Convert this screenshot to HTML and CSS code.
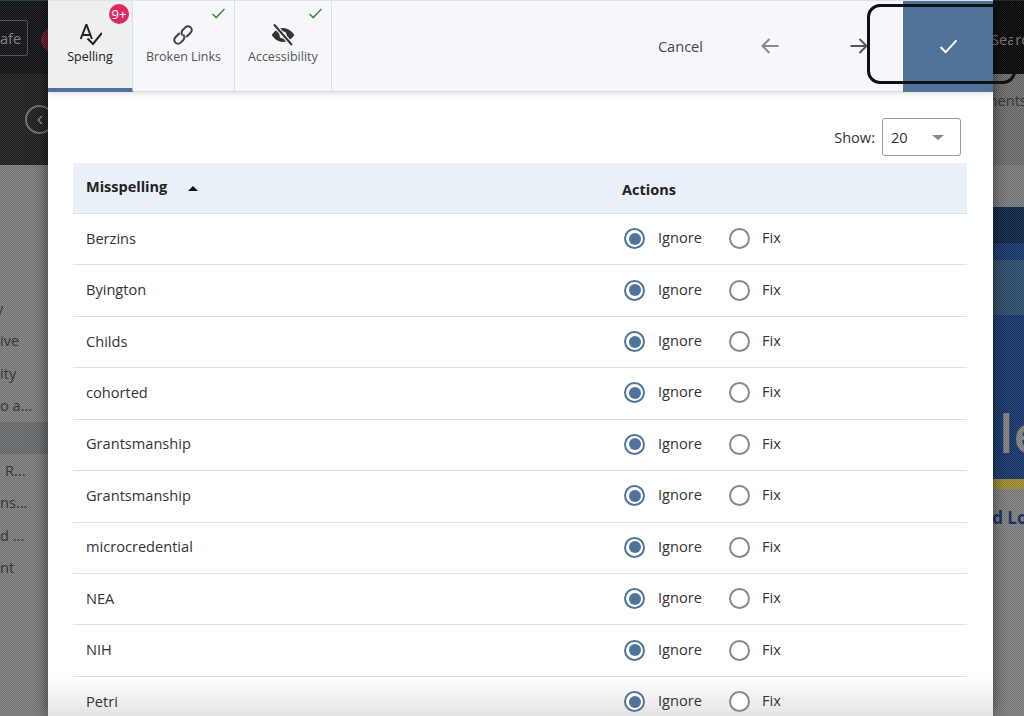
FILE: index.html
```html
<!DOCTYPE html>
<html lang="en">
<head>
<meta charset="utf-8">
<title>Spelling check</title>
<link rel="stylesheet" href="styles.css">
</head>
<body>
<div class="page">
  <aside class="side-left">
    <div class="bg-header"><span class="safe-btn">afe</span></div>
    <div class="bg-sub"><span class="back-circle"><svg viewBox="0 0 12 16" width="8" height="12"><path d="M9 2 3 8l6 6" fill="none" stroke="#999" stroke-width="2"/></svg></span></div>
    <div class="bg-nav">
      <div class="nav-item nav-clip">y</div>
      <div class="nav-item">ive</div>
      <div class="nav-item">ity</div>
      <div class="nav-item">o a...</div>
      <div class="nav-item nav-current"></div>
      <div class="nav-item nav-inset">R...</div>
      <div class="nav-item">ns...</div>
      <div class="nav-item">d ...</div>
      <div class="nav-item">nt</div>
    </div>
  </aside>

  <main class="modal">
    <header class="toolbar">
      <div class="tab tab-active">
        <span class="badge">9+</span>
        <svg class="tab-icon" viewBox="0 0 24 24" width="24" height="24"><path d="M2.700 16 8.200 2h.4l5.300 14M4.500 12h8" fill="none" stroke="#222" stroke-width="2"/><path d="M9.500 15.500 15 21l9-11" fill="none" stroke="#222" stroke-width="2"/></svg>
        <span class="tab-label">Spelling</span>
      </div>
      <div class="tab tab-links">
        <svg class="tick" viewBox="0 0 16 12" width="15" height="11"><path d="M1.500 6.500 5.500 10.500 14.500 1" fill="none" stroke="#3f8b45" stroke-width="1.600"/></svg>
        <svg class="tab-icon" viewBox="0 0 24 24" width="24" height="24"><g transform="translate(12 12) scale(.83) rotate(-45) translate(-12 -12)" fill="none" stroke="#444" stroke-width="2.500"><path d="M11 7.500H3.500a4.500 4.500 0 0 0 0 9H8a4.500 4.500 0 0 0 4.500-4.500"/><path d="M13 16.500h7.500a4.500 4.500 0 0 0 0-9H16a4.500 4.500 0 0 0-4.500 4.500"/></g></svg>
        <span class="tab-label">Broken Links</span>
      </div>
      <div class="tab tab-access">
        <svg class="tick" viewBox="0 0 16 12" width="15" height="11"><path d="M1.500 6.500 5.500 10.500 14.500 1" fill="none" stroke="#3f8b45" stroke-width="1.600"/></svg>
        <svg class="tab-icon" viewBox="0 0 24 24" width="24" height="24"><path d="M12 5C6.500 5 2.500 9 .8 12c1.700 3 5.700 7 11.200 7s9.500-4 11.200-7C21.500 9 17.500 5 12 5z" fill="#333"/><circle cx="12" cy="12" r="3.500" fill="#f5f7fa"/><path d="M3 1.500 21 22" stroke="#f5f7fa" stroke-width="4.500"/><path d="M3 1.500 21 22" stroke="#333" stroke-width="2"/></svg>
        <span class="tab-label">Accessibility</span>
      </div>
      <div class="actions">
        <span class="cancel">Cancel</span>
        <svg class="arrow-prev" viewBox="0 0 18 16" width="18" height="16"><path d="M17.500 8H1.500M8.500 1 1.500 8l7 7" fill="none" stroke="#8a8a8a" stroke-width="2"/></svg>
        <svg class="arrow-next" viewBox="0 0 18 16" width="18" height="16"><path d="M.5 8h16M9.500 1l7 7-7 7" fill="none" stroke="#555" stroke-width="2"/></svg>
        <div class="confirm"><svg viewBox="0 0 20 16" width="19" height="15"><path d="M1.500 8.500 7 14 18.500 1.500" fill="none" stroke="#fff" stroke-width="2"/></svg></div>
      </div>
    </header>

    <section class="content">
      <div class="show-row">
        <label class="show-label">Show:</label>
        <div class="select"><span>20</span><i class="caret"></i></div>
      </div>
      <table class="grid">
        <thead>
          <tr><th class="col-word"><span class="th-word">Misspelling</span><i class="sort"></i></th><th class="col-act"><span class="th-act">Actions</span></th></tr>
        </thead>
        <tbody>
          <tr><td>Berzins</td><td><div class="choices"><i class="radio on"></i><span class="opt-ignore">Ignore</span><i class="radio"></i><span>Fix</span></div></td></tr>
          <tr><td>Byington</td><td><div class="choices"><i class="radio on"></i><span class="opt-ignore">Ignore</span><i class="radio"></i><span>Fix</span></div></td></tr>
          <tr><td>Childs</td><td><div class="choices"><i class="radio on"></i><span class="opt-ignore">Ignore</span><i class="radio"></i><span>Fix</span></div></td></tr>
          <tr><td>cohorted</td><td><div class="choices"><i class="radio on"></i><span class="opt-ignore">Ignore</span><i class="radio"></i><span>Fix</span></div></td></tr>
          <tr><td>Grantsmanship</td><td><div class="choices"><i class="radio on"></i><span class="opt-ignore">Ignore</span><i class="radio"></i><span>Fix</span></div></td></tr>
          <tr><td>Grantsmanship</td><td><div class="choices"><i class="radio on"></i><span class="opt-ignore">Ignore</span><i class="radio"></i><span>Fix</span></div></td></tr>
          <tr><td>microcredential</td><td><div class="choices"><i class="radio on"></i><span class="opt-ignore">Ignore</span><i class="radio"></i><span>Fix</span></div></td></tr>
          <tr><td>NEA</td><td><div class="choices"><i class="radio on"></i><span class="opt-ignore">Ignore</span><i class="radio"></i><span>Fix</span></div></td></tr>
          <tr><td>NIH</td><td><div class="choices"><i class="radio on"></i><span class="opt-ignore">Ignore</span><i class="radio"></i><span>Fix</span></div></td></tr>
          <tr><td>Petri</td><td><div class="choices"><i class="radio on"></i><span class="opt-ignore">Ignore</span><i class="radio"></i><span>Fix</span></div></td></tr>
        </tbody>
      </table>
    </section>
  </main>

  <aside class="side-right">
    <div class="r-header">Searc</div>
    <div class="r-sub">ments</div>
    <div class="r-gap"></div>
    <div class="r-hero">
      <div class="hero-a"></div>
      <div class="hero-b"></div>
      <div class="hero-c"></div>
      <div class="hero-d"><span class="hero-title">le</span></div>
      <div class="hero-gold"></div>
    </div>
    <div class="r-caption">nd Lo</div>
  </aside>
</div>
<div class="focus-ring"></div>
</body>
</html>
```
FILE: styles.css
```css
* { box-sizing: border-box; }
html, body { margin: 0; height: 716px; overflow: hidden; }
body { font-family: "Open Sans", "Liberation Sans", sans-serif; color: #333; background: #7f7f7f; position: relative; }
.page { display: flex; width: 1024px; height: 716px; overflow: hidden; }

/* dimmed page behind the dialog: a fine screen-door pattern lies over it */
.side-left, .side-right { position: relative; }
.side-left::after, .side-right::after { content: ""; position: absolute; inset: 0; pointer-events: none; background: repeating-conic-gradient(rgba(0,0,0,.16) 0 25%, rgba(255,255,255,.07) 0 50%) 0 0 / 2px 2px; }

.side-left { width: 48px; flex: none; overflow: hidden; display: flex; flex-direction: column; background: #848484; }
.bg-header { height: 74px; flex: none; background: #16171b; border-top: 1px solid #2c3c52; display: flex; align-items: flex-start; padding-top: 19px; position: relative; }
.safe-btn { width: 28px; height: 36px; flex: none; border: 1px solid #555; border-left: 0; border-radius: 0 3px 3px 0; color: #8a8a8a; font-size: 14.600px; line-height: 34px; }
.bg-header::after { content: ""; position: absolute; left: 41px; top: 26px; width: 26px; height: 26px; border-radius: 50%; background: #7a2036; }
.bg-sub { height: 91px; flex: none; background: #232323; padding: 31px 0 0 25px; }
.back-circle { display: flex; align-items: center; justify-content: center; width: 29px; height: 29px; border: 2px solid #777; border-radius: 50%; }
.bg-nav { flex: 1; padding-top: 127px; }
.nav-item { height: 32.400px; line-height: 32.400px; font-size: 14.600px; color: #333; white-space: nowrap; }
.nav-clip { text-indent: -4px; }
.nav-inset { padding-left: 5px; }
.nav-current { background: #6f7379; }

.side-right { width: 31px; flex: none; overflow: hidden; background: #878787; display: flex; flex-direction: column; white-space: nowrap; }
.r-header { height: 74px; flex: none; background: #0b0b0c; border-top: 1px solid #1a2330; color: #808080; font-size: 14.600px; line-height: 76px; text-indent: -2px; }
.r-sub { height: 91px; flex: none; background: #747474; color: #333; font-size: 14.600px; line-height: 52px; text-indent: -9px; }
.r-gap { height: 42px; flex: none; background: #828282; }
.r-hero { height: 282px; flex: none; display: flex; flex-direction: column; }
.hero-a { height: 36px; flex: none; background: #11294a; }
.hero-b { height: 17px; flex: none; background: #1c3c74; }
.hero-c { height: 55px; flex: none; background: #315274; }
.hero-d { height: 164px; flex: none; background: #1b3b72; color: #8a8a8a; font-size: 52px; font-weight: 600; line-height: 52px; padding-top: 92px; text-indent: 6px; }
.hero-gold { height: 10px; flex: none; background: #a8923a; }
.r-caption { color: #173269; font-weight: 700; font-size: 17px; line-height: 24px; padding-top: 17px; text-indent: -12px; }

/* dialog */
.modal { width: 945px; flex: none; background: #fff; display: flex; flex-direction: column; box-shadow: 0 0 14px rgba(0,0,0,.55); position: relative; z-index: 1; }
.toolbar { height: 92px; flex: none; display: flex; background: #f5f7fa; border-top: 1px solid #dfe2e6; border-bottom: 1px solid #d8dce0; box-shadow: 0 2px 5px rgba(0,0,0,.12); position: relative; }
.tab { position: relative; display: flex; flex-direction: column; align-items: center; padding-top: 22px; border-right: 1px solid #dcdfe3; color: #555; }
.tab-active { width: 85px; background: #edeff1; border-bottom: 4px solid #4f739b; color: #222; margin-bottom: -1px; }
.tab-links { width: 102px; }
.tab-access { width: 97px; }
.tab-icon { display: block; }
.tab-label { font-size: 12.500px; line-height: 18px; margin-top: 1px; }
.badge { position: absolute; left: 61px; top: 3px; width: 20px; height: 20px; border-radius: 50%; background: #dd2a62; color: #fff; font-size: 13px; line-height: 20px; text-align: center; }
.tick { position: absolute; right: 8px; top: 7px; }
.actions { flex: 1; display: flex; align-items: center; }
.cancel { margin-left: 326px; font-size: 14.600px; color: #444; }
.arrow-prev { margin-left: 58px; }
.arrow-next { margin-left: 71px; }
.confirm { margin-left: 35px; width: 90px; height: 91px; margin-bottom: -1px; background: #4f7299; display: flex; align-items: center; justify-content: center; }

.content { flex: 1; overflow: hidden; padding: 0 26px 0 25px; background: linear-gradient(rgba(228,228,228,0), rgb(228,228,228)) bottom / 100% 40px no-repeat; }
.show-row { height: 71px; display: flex; align-items: flex-start; justify-content: flex-end; padding: 26px 6px 0 0; }
.show-label { font-size: 14.600px; line-height: 38px; margin-right: 7px; color: #333; }
.select { width: 79px; height: 38px; border: 1px solid #999; border-radius: 3px; display: flex; align-items: center; justify-content: space-between; padding: 0 16px 0 8px; font-size: 14.600px; color: #333; }
.caret { width: 0; height: 0; border-left: 6px solid transparent; border-right: 6px solid transparent; border-top: 5px solid #888; }
.grid { width: 894px; border-collapse: collapse; table-layout: fixed; font-size: 14.600px; }
.grid th { height: 50.500px; background: #e9f0f8; text-align: left; font-weight: 700; font-size: 14.500px; color: #222; border-bottom: 1px solid #dde2e8; padding: 0; }
.col-word { width: 549px; padding-left: 13px !important; }
.th-word { position: relative; top: -2px; }
.th-act { position: relative; top: 1px; }
.sort { display: inline-block; width: 0; height: 0; margin-left: 21px; border-left: 5.500px solid transparent; border-right: 5.500px solid transparent; border-bottom: 5.500px solid #111; position: relative; top: -3px; }
.grid td { height: 51.430px; padding: 0 0 3px 13px; border-bottom: 1px solid #dcdfe3; color: #333; }
.grid td:last-child { padding: 0 0 1px 2px; }
.choices { display: flex; align-items: center; }
.choices span { position: relative; top: -1.500px; }
.radio { width: 21px; height: 21px; flex: none; border-radius: 50%; border: 2px solid #888; background: #fff; margin-right: 12px; display: flex; align-items: center; justify-content: center; }
.radio.on { border-color: #4f739b; }
.radio.on::after { content: ""; width: 12px; height: 12px; border-radius: 50%; background: #4f739b; }
.opt-ignore { width: 71px; margin-left: 1px; }

.focus-ring { position: absolute; left: 867px; top: 4px; width: 149px; height: 80px; border: 3px solid #111; border-radius: 13px; z-index: 2; pointer-events: none; }
```
